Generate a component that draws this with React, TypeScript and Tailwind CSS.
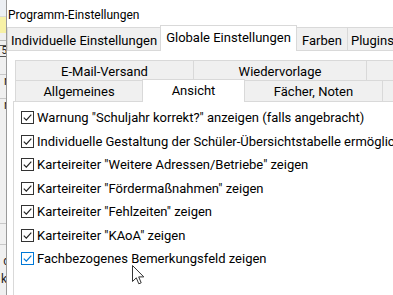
import React from "react";

function Check({ blue = false }: { blue?: boolean }) {
  return (
    <span
      className={
        "flex-none w-[13px] h-[13px] border bg-white flex items-center justify-center " +
        (blue ? "border-[#0078d7]" : "border-[#333333]")
      }
    >
      <svg width="11" height="11" viewBox="0 0 11 11">
        <path
          d="M1.8 5.6 L4.3 8.1 L9.3 2.6"
          fill="none"
          stroke={blue ? "#0078d7" : "#222222"}
          strokeWidth="1.2"
        />
      </svg>
    </span>
  );
}

function Row({ label, blue = false }: { label: string; blue?: boolean }) {
  return (
    <div className="h-[23.5px] flex items-center gap-[3px] whitespace-nowrap">
      <Check blue={blue} />
      <span className="leading-[15px]">{label}</span>
    </div>
  );
}

const items = [
  'Warnung "Schuljahr korrekt?" anzeigen (falls angebracht)',
  "Individuelle Gestaltung der Schüler-Übersichtstabelle ermöglichen",
  'Karteireiter "Weitere Adressen/Betriebe" zeigen',
  'Karteireiter "Fördermaßnahmen" zeigen',
  'Karteireiter "Fehlzeiten" zeigen',
  'Karteireiter "KAoA" zeigen',
];

export default function App() {
  return (
    <div className="w-[393px] h-[295px] overflow-hidden relative flex bg-white text-[13px] text-black font-[Roboto,sans-serif]">
      {/* window behind */}
      <div className="w-[6px] flex-none flex flex-col bg-[#f0f0f0] overflow-hidden text-[12px] leading-none text-[#222]">
        <div className="h-[17px] bg-[#eceff3] border-b border-[#d8d8d8]" />
        <div className="h-[16px] bg-[#f7f1a6]" />
        <div className="h-[8px] border-b border-[#b8b8b8]" />
        <div className="h-[20px] flex items-center justify-end">
          <span className="border border-[#555] px-px text-[10px] -mr-[3px]">5</span>
        </div>
        <div className="h-[14px] border-b border-[#c8c8c8]" />
        <div className="h-[12px] flex justify-end -mr-[2px]">r</div>
        <div className="h-[12px] border-b border-[#c8c8c8]" />
        <div className="h-[10px] flex justify-end -mr-[2px]">r</div>
        <div className="h-[115px] border-b border-[#c8c8c8]" />
        <div className="h-[21px] border-b border-[#c8c8c8]" />
        <div className="h-[22px] flex items-end justify-end -mr-[4px]">d</div>
        <div className="h-[18px] flex items-end justify-end -mr-[4px]">ki</div>
      </div>
      <div className="w-px flex-none bg-[#9a9a9a]" />

      {/* dialog */}
      <div className="flex-1 min-w-0 flex flex-col bg-white">
        {/* title */}
        <div className="h-[25px] flex-none pl-[1px] pt-[8px] text-[12px] leading-[14px] whitespace-nowrap">
          Programm-Einstellungen
        </div>

        {/* outer tabs */}
        <div className="h-[25px] flex-none flex items-end whitespace-nowrap relative z-10">
          <div className="w-[154px] flex-none h-[23px] bg-[#f0f0f0] border-t border-l border-r border-[#d9d9d9] flex justify-center pt-[5px] leading-[15px]">
            Individuelle Einstellungen
          </div>
          <div className="w-[137px] flex-none -ml-px h-[26px] -mb-px bg-white border-t border-l border-r border-[#d9d9d9] flex justify-center pt-[4px] leading-[15px]">
            Globale Einstellungen
          </div>
          <div className="w-[52px] flex-none -ml-px h-[23px] bg-[#f0f0f0] border-t border-l border-r border-[#d9d9d9] flex justify-center pt-[5px] leading-[15px]">
            Farben
          </div>
          <div className="w-[60px] flex-none -ml-px h-[23px] bg-[#f0f0f0] border-t border-l border-r border-[#d9d9d9] flex justify-start pl-[3px] pt-[5px] leading-[15px]">
            Plugins
          </div>
        </div>

        {/* outer body */}
        <div className="flex-1 border-t border-[#d9d9d9] pt-[9px] pl-[6px] flex flex-col min-h-0">
          {/* inner tab row 1 */}
          <div className="h-[20px] flex-none flex ml-[2px] whitespace-nowrap">
            <div className="w-[179px] flex-none bg-[#f0f0f0] border-t border-l border-r border-[#d9d9d9] flex justify-center pt-[3px] leading-[15px]">
              E-Mail-Versand
            </div>
            <div className="w-[174px] flex-none -ml-px bg-[#f0f0f0] border-t border-l border-r border-[#d9d9d9] flex justify-center pt-[3px] leading-[15px]">
              Wiedervorlage
            </div>
            <div className="w-[40px] flex-none -ml-px bg-[#f0f0f0] border-t border-l border-r border-[#d9d9d9]" />
          </div>
          {/* inner tab row 2 */}
          <div className="h-[21px] flex-none flex items-end ml-[2px] whitespace-nowrap relative z-10">
            <div className="w-[128px] h-[21px] flex-none bg-[#f0f0f0] border-t border-l border-r border-[#d9d9d9] flex justify-center pt-[3px] leading-[15px]">
              Allgemeines
            </div>
            <div className="w-[103px] h-[23px] -mb-px flex-none -ml-px bg-white border-t border-l border-r border-[#d9d9d9] flex justify-center pt-[3px] leading-[15px]">
              Ansicht
            </div>
            <div className="w-[139px] h-[21px] flex-none -ml-px bg-[#f0f0f0] border-t border-l border-r border-[#d9d9d9] flex justify-center pt-[3px] leading-[15px]">
              Fächer, Noten
            </div>
            <div className="w-[30px] h-[21px] flex-none -ml-px bg-[#f0f0f0] border-t border-l border-r border-[#d9d9d9]" />
          </div>
          {/* inner panel */}
          <div className="flex-1 border-t border-l border-[#d9d9d9] pt-[4px] pl-[7px] flex flex-col">
            {items.map((t) => (
              <Row key={t} label={t} />
            ))}
            <Row label="Fachbezogenes Bemerkungsfeld zeigen" blue />
          </div>
        </div>
      </div>

      {/* mouse cursor */}
      <svg
        className="absolute left-[132px] top-[265px]"
        width="13"
        height="20"
        viewBox="0 0 13 20"
      >
        <path
          d="M0.5 0.5 L0.5 16.5 L4.3 12.8 L6.8 18.8 L9.2 17.8 L6.7 11.9 L11.8 11.9 Z"
          fill="white"
          stroke="#333"
          strokeWidth="1"
          strokeLinejoin="miter"
        />
      </svg>
    </div>
  );
}
